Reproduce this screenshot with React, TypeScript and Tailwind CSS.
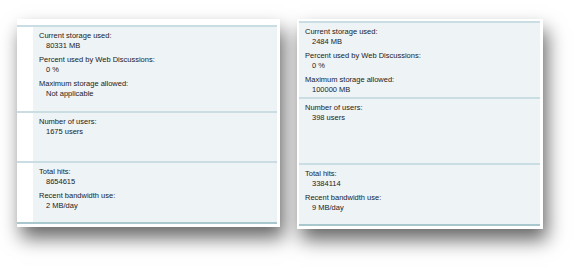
import React from "react";

type Item = { label: string; value: string };

function Section({ items, h, gutter }: { items: Item[]; h: string; gutter: boolean }) {
  return (
    <div className={`flex border-t-2 border-[#c9dde2] ${h}`}>
      {gutter && <div className="w-[16px] shrink-0 bg-white" />}
      <div className="flex-1 bg-[#eef3f6] pt-[4px] pl-[6px]">
        <div className="flex flex-col gap-[4px]">
          {items.map((it) => (
            <div key={it.label} className="flex flex-col">
              <div className="leading-[10px] h-[10px]">{it.label}</div>
              <div className="leading-[10px] h-[10px] pl-[7px]">{it.value}</div>
            </div>
          ))}
        </div>
      </div>
    </div>
  );
}

function Card({
  data,
  gutter,
  heights,
  className,
}: {
  data: Item[][];
  gutter: boolean;
  heights: string[];
  className: string;
}) {
  return (
    <div className={`bg-white shadow-[4px_11px_18px_rgba(0,0,0,0.6)] pr-[3px] ${className}`}>
      {data.map((items, i) => (
        <Section key={i} items={items} h={heights[i]} gutter={gutter} />
      ))}
      <div className="border-t-2 border-[#a9c8cd]" />
    </div>
  );
}

export default function App() {
  const left: Item[][] = [
    [
      { label: "Current storage used:", value: "80331 MB" },
      { label: "Percent used by Web Discussions:", value: "0 %" },
      { label: "Maximum storage allowed:", value: "Not applicable" },
    ],
    [{ label: "Number of users:", value: "1675 users" }],
    [
      { label: "Total hits:", value: "8654615" },
      { label: "Recent bandwidth use:", value: "2 MB/day" },
    ],
  ];
  const right: Item[][] = [
    [
      { label: "Current storage used:", value: "2484 MB" },
      { label: "Percent used by Web Discussions:", value: "0 %" },
      { label: "Maximum storage allowed:", value: "100000 MB" },
    ],
    [{ label: "Number of users:", value: "398 users" }],
    [
      { label: "Total hits:", value: "3384114" },
      { label: "Recent bandwidth use:", value: "9 MB/day" },
    ],
  ];
  return (
    <div
      className="w-[579px] h-[267px] bg-white flex items-start text-[7.5px] text-[#222222]"
      style={{ fontFamily: '"Liberation Sans", Arial, sans-serif' }}
    >
      <Card
        data={left}
        gutter
        heights={["h-[86px]", "h-[50px]", "h-[61px]"]}
        className="ml-[17px] mt-[19px] w-[263px] pt-[6px] pb-[3px]"
      />
      <Card
        data={right}
        gutter={false}
        heights={["h-[76px]", "h-[66px]", "h-[61px]"]}
        className="ml-[17px] mt-[19px] w-[246px] pt-[2px] pl-[2px] pb-[3px]"
      />
    </div>
  );
}
